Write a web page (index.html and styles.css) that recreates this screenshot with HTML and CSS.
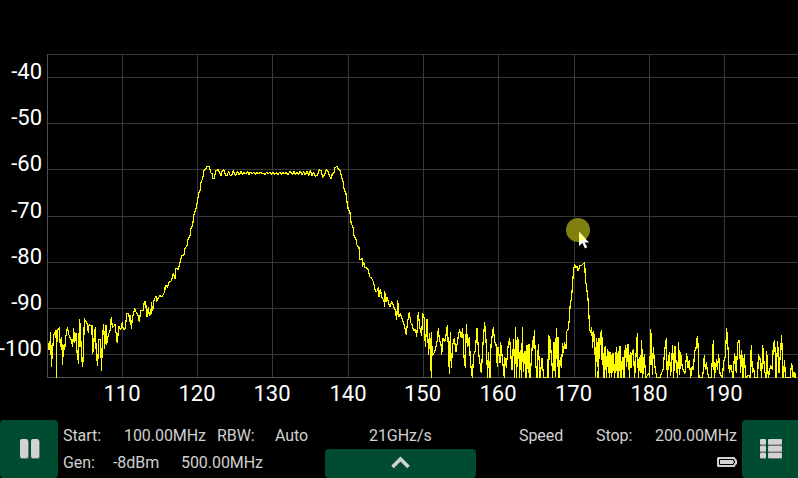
FILE: index.html
```html
<!DOCTYPE html>
<html lang="en">
<head>
<meta charset="utf-8">
<title>Spectrum analyzer</title>
<link rel="stylesheet" href="styles.css">
</head>
<body>
<main class="screen">
<svg class="plot" viewBox="0 0 798 420" role="img" aria-label="Spectrum">
<path class="grid" d="M122.5 54V378M197.5 54V378M272.5 54V378M348.5 54V378M423.5 54V378M498.5 54V378M574.5 54V378M649.5 54V378M724.5 54V378M48 54.5H798M48 77.5H798M48 123.5H798M48 169.5H798M48 216.5H798M48 262.5H798M48 308.5H798M48 354.5H798"/>
<path class="axis" d="M47.5 54V378M47 377.5H798"/>
<g class="labels side"><text x="42" y="79">-40</text><text x="42" y="125">-50</text><text x="42" y="171">-60</text><text x="42" y="218">-70</text><text x="42" y="264">-80</text><text x="42" y="310">-90</text><text x="42" y="356">-100</text></g>
<g class="labels"><text x="122" y="401">110</text><text x="197" y="401">120</text><text x="272" y="401">130</text><text x="348" y="401">140</text><text x="422.500" y="401">150</text><text x="498" y="401">160</text><text x="573.500" y="401">170</text><text x="649" y="401">180</text><text x="724" y="401">190</text></g>
<g class="trace">
<polyline transform="translate(0 250) scale(.33333)" points="145,300 148,272 150,300 152,247 154,350 158,300 161,255 168,240 170,383 171,240 176,238 178,232 181,290 185,262 188,345 190,285 194,300 197,262 202,232 206,252 211,265 214,270 218,292 221,235 224,278 228,248 231,305 236,343 238,208 241,225 244,310 248,352 251,285 253,206 258,215 263,225 265,250 267,225 276,226 277,312 281,300 282,268 286,230 289,315 293,348 296,270 301,268 305,363 307,262 311,223 314,297 318,225 320,285 324,258 328,246 331,238 334,200 337,232 341,230 345,222 348,247 352,280 356,228 362,240 367,215 370,240 376,235 380,192 386,190 389,215 392,195 394,238 397,205 404,176 409,188 414,195 418,215 422,180 429,183 433,155 437,155 440,195 442,202 445,170 448,197 453,190 454,157 458,182 462,150 468,138 470,155 474,145 480,137"/>
<polyline transform="translate(150 150) scale(.33333)" points="30,437 37,440 41,430 44,428 46,405 52,412 57,397 64,392 70,370 75,387 77,355 85,358 90,338 95,318 102,315 105,295 111,287 114,268 120,258 122,237 128,225 131,197 137,180 142,155 147,127 151,120 153,97 158,85 162,62 167,58 171,49 178,50 182,68 187,72 188,87 193,86 197,63 204,59 208,67 213,78 217,61 222,60 226,75 231,78 236,63 241,78 246,74 250,61 256,77 262,65 268,74 273,63 278,74 283,67 287,72 292,65 297,73 301,66 306,72 311,67 316,73 321,67 326,72 331,66 336,72 340,69 345,73 350,67 355,71 360,66 365,73 369,66 374,73 379,68 384,73 389,66 394,73 399,66 404,72 409,67 414,74 419,66 423,66 428,73 432,63 436,73 441,66 446,73 451,63 456,75 461,65 466,75 471,63 476,77 481,61 486,76 491,67 496,79 502,75 508,60 513,61 518,82 523,76 528,60 533,61 538,78 544,87 547,70 552,69 555,53 561,49 565,57 571,62 574,80 579,95 583,121 588,130 590,151 594,175 599,188"/>
<polyline transform="translate(330 200) scale(.33333)" points="50,-4 53,20 60,37 63,67 70,85 72,107 79,120 80,134 87,143 90,180 97,175 98,200 101,185 104,202 108,202 115,210 119,230 125,235 131,247 134,265 138,275 143,272 145,260 147,290 151,267 155,290 162,303 164,320 164,273 168,305 172,290 175,308 180,320 185,303 192,322 196,330 200,360 203,300 207,350 211,340 215,352 219,365 224,380 229,404 232,370 238,337 242,367 247,375 250,390 257,390 260,410 265,337 269,380 275,408 278,340 283,355 286,440 291,358 296,466 299,398 302,465 304,533 304,395 307,467 310,463"/>
<polyline transform="translate(420 300) scale(.33333)" points="40,164 46,150 52,120 55,85 58,120 63,132 65,165 69,115 74,125 78,105 82,75 86,160 88,223 91,95 94,205 98,135 103,115 108,155 113,120 119,88 124,115 128,85 132,170 136,205 139,72 143,142 148,110 151,185 157,233 161,165 166,152 171,85 176,160 184,220 189,130 194,67 198,120 203,233 205,155 210,233 213,135 220,82 224,125 228,132 232,200 234,140 240,190 242,127 247,175 253,233 254,170 259,203 264,140 269,115 272,160 276,210 281,117 284,233 287,82 290,233 293,112 296,130 299,233 302,150 305,233 307,80 310,215 315,152 318,233 321,135 325,220 327,133 330,233 333,195 338,120 341,145 343,90 347,190 351,233 355,133 360,233 366,175 371,233 383,233 386,107 390,110"/>
<polyline transform="translate(540 210) scale(.33333)" points="27,377 25,503 29,380 32,412 36,462 38,503 42,397 46,500 49,354 52,472 54,380 57,503 61,440 64,475 68,400 71,430 73,397 79,418 80,365 85,357 88,328 90,292 95,258 98,217 101,177 104,163 107,174 111,170 115,184 119,168 124,167 129,162 134,157 136,205 140,235 144,265 147,320 149,358 152,370 155,350 158,415 160,362 164,385 167,500 169,385 173,410 175,503 177,383 181,403 185,360 188,450 192,498 194,410 198,480 203,420 207,438 209,503 213,435 216,490 219,430 222,475 224,503 229,415 232,503 237,470 240,408 244,503 249,440 252,503 256,405 260,470 262,435 265,402 269,503"/>
<polyline transform="translate(600 310) scale(.33333)" points="-7,203 0,100 4,60 6,150 9,130 12,203 16,108 20,203 22,117 27,190 30,125 34,200 38,155 41,140 43,203 48,160 50,112 54,203 58,108 61,203 67,147 71,203 77,105 80,145 84,102 87,180 91,125 93,175 96,130 100,117 104,203 108,135 112,70 115,203 121,135 123,190 125,90 128,203 133,133 137,203 147,190 149,200 152,57 155,100 157,195 160,110 164,165 170,203 180,203 190,175 193,130 199,84 202,203 208,125 212,197 218,105 221,203 225,107 229,170 233,203 236,96 239,195 242,127 247,175 255,190 260,130 264,175 268,150 272,203 276,170 280,180 284,125 288,115 292,77 294,103 297,203 308,203 313,135 316,180 319,155 323,190 327,203 334,203 340,90 343,203 350,147 352,180 356,133 360,190 367,203 371,155 376,140 380,54 385,130 388,190 393,165 399,203 404,130 409,190 413,100 418,90 422,190 425,120 429,203 433,133 437,203 447,195 450,203 454,105 457,190 461,175 465,203 473,203 475,133 480,145 485,203 488,105 494,182 498,203 500,123 505,203 512,165 517,180 520,105 524,90 528,203 533,93 537,190 540,145 545,75 549,203 554,150 556,203 570,203 575,159 578,183 583,203 584,185 587,203"/>
<path d="M792.5 372V377"/>
</g>
<circle class="marker" cx="578" cy="230" r="12"/>
<path class="halo" d="M579 232V242L585 239Z"/>
<path class="pointer" d="M579 232V246L582.400 243L585 248.500L587.200 247.300L584.700 242.500H589Z"/>
<path class="halo" d="M579 232V241.500L586 239Z"/>
</svg>
<footer class="bar">
<button class="key pause" aria-label="Pause"><svg viewBox="0 0 58 58"><path class="shade" d="M22 20h5q2 0 2 2v15q0 2-2 2h-5q-2 0-2-2V22q0-2 2-2zm11 0h5q2 0 2 2v15q0 2-2 2h-5q-2 0-2-2V22q0-2 2-2z"/><path class="ink" d="M22 19h4q2 0 2 2v15q0 2-2 2h-4q-2 0-2-2V21q0-2 2-2zm11 0h4q2 0 2 2v15q0 2-2 2h-4q-2 0-2-2V21q0-2 2-2z"/></svg></button>
<div class="info">
<div class="row"><span class="start">Start:</span><span class="freq">100.00MHz</span><span class="rbw">RBW:</span><span class="auto">Auto</span><span class="rate">21GHz/s</span><span class="speed">Speed</span><span class="stop">Stop:</span><span>200.00MHz</span></div>
<div class="row second"><span class="gen">Gen:</span><span class="level">-8dBm</span><span class="genfreq">500.00MHz</span>
<button class="key expand" aria-label="Expand"><svg viewBox="0 0 151 29"><path class="chevron" d="M67.500 18L75.500 10L83.500 18"/></svg></button>
<svg class="battery" viewBox="0 0 20 10"><path class="ink" d="M1.500 0H17Q18.500 0 18.500 2L20 3V7L18.500 8Q18.500 10 17 10H1.500Q0 10 0 8.500V1.500Q0 0 1.500 0Z"/><path class="cell" d="M2.500 2.500H16.500V4H17.500V6H16.500V7.500H2.500Z"/></svg></div>
</div>
<button class="key menu" aria-label="Menu"><svg viewBox="1 0 58 58"><g class="shade"><rect x="19" y="20" width="6" height="6" rx="1"/><rect x="27" y="20" width="14" height="6" rx="1"/><rect x="19" y="27" width="6" height="6" rx="1"/><rect x="27" y="27" width="14" height="6" rx="1"/><rect x="19" y="34" width="6" height="5" rx="1"/><rect x="27" y="34" width="14" height="5" rx="1"/></g><g class="ink"><rect x="19" y="19" width="6" height="5.500" rx="1"/><rect x="27" y="19" width="14" height="5.500" rx="1"/><rect x="19" y="26" width="6" height="5.500" rx="1"/><rect x="27" y="26" width="14" height="5.500" rx="1"/><rect x="19" y="33" width="6" height="5" rx="1"/><rect x="27" y="33" width="14" height="5" rx="1"/></g></svg></button>
</footer>
</main>
</body>
</html>
```
FILE: styles.css
```css
body { margin: 0; background: #000; }
.screen { display: flex; flex-direction: column; width: 798px; height: 478px; overflow: hidden; background: #000; font-family: Roboto, "Liberation Sans", sans-serif; }
.plot { display: block; width: 798px; height: 420px; }
.grid, .axis { fill: none; stroke: #383838; stroke-width: 1; shape-rendering: crispEdges; }
.axis { stroke: #505050; }
.labels { fill: #fff; font-size: 22px; text-anchor: middle; }
.side { text-anchor: end; }
.trace { fill: none; stroke: #ff0; stroke-width: 1.2; shape-rendering: crispEdges; }
.trace polyline { vector-effect: non-scaling-stroke; }
.trace polyline, .trace path { stroke-linejoin: bevel; }
.marker { fill: #80800f; }
.pointer { fill: #fff; }
.halo { fill: #ff8; }
.bar { display: flex; height: 58px; }
.key { display: block; flex: none; box-sizing: border-box; padding: 0; border: 0; border-radius: 4px; background: #004c30; }
.key svg { display: block; width: 100%; height: 100%; }
.pause { width: 58px; height: 58px; }
.menu { width: 58px; height: 58px; border-radius: 4px 0 0 4px; margin-right: -2px; }
.info { display: flex; flex-direction: column; flex: none; width: 684px; }
.row { display: flex; height: 29px; padding-left: 5px; color: #d0d0d0; font-size: 16px; line-height: 31px; letter-spacing: -0.06px; white-space: nowrap; }
.row span { flex: none; }
.second { line-height: 27px; }
.start { width: 61px; }
.freq { width: 93px; }
.rbw { width: 58px; }
.auto { width: 94px; }
.rate { width: 150px; }
.speed { width: 77px; }
.stop { width: 59px; }
.gen { width: 50px; }
.level { width: 68px; }
.genfreq { width: 144px; }
.expand { width: 151px; height: 29px; }
.battery { width: 20px; height: 10px; margin: 8px 0 0 241px; }
.ink { fill: #d2d2d2; }
.shade { fill: #6a7771; }
.cell { fill: #d2d2d2; stroke: #000; stroke-width: 1; }
.chevron { fill: none; stroke: #d2d2d2; stroke-width: 3.6; }
```
